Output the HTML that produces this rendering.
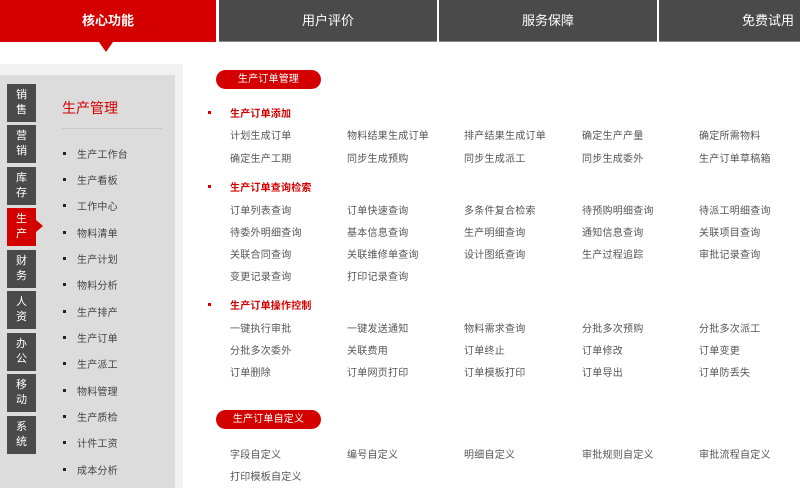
<!DOCTYPE html>
<html><head><meta charset="utf-8"><style>
*{margin:0;padding:0;box-sizing:border-box}
body{width:800px;height:488px;overflow:hidden;background:#fff;font-family:"Liberation Sans","Microsoft YaHei","Noto Sans CJK SC",sans-serif;position:relative}
.a{position:absolute;white-space:nowrap}
.tab{position:absolute;top:0;height:42px;background:#4a4a4a;color:#fff;font-size:13px;line-height:42px;text-align:center;border-bottom:1px solid #888}
.vt{position:absolute;left:7px;width:29px;height:38px;background:#4a4a4a;color:#fff;font-size:11px;line-height:15px;text-align:center;padding-top:4px}
.li{position:absolute;left:77px;font-size:10px;letter-spacing:.2px;color:#444}
.li:before{content:"";position:absolute;left:-14px;top:6px;width:3px;height:3px;background:#222}
.t{position:absolute;font-size:10px;letter-spacing:.25px;color:#555;white-space:nowrap}
.h{position:absolute;left:230px;font-size:10px;letter-spacing:.2px;color:#d40000;font-weight:bold}
.h:before{content:"";position:absolute;left:-22px;top:6px;width:3px;height:3px;background:#d40000}
.pill{position:absolute;left:216px;width:105px;height:19px;background:#d40000;border-radius:10px;color:#fff;font-size:10px;letter-spacing:.2px;line-height:19px;text-align:center}
</style></head><body>
<div class="tab" style="left:0;width:216px;background:#d40000;font-weight:bold;border-bottom:none">核心功能</div>
<div class="a" style="left:99px;top:42px;width:0;height:0;border-left:7px solid transparent;border-right:7px solid transparent;border-top:10px solid #d40000"></div>
<div class="tab" style="left:219px;width:218px">用户评价</div>
<div class="tab" style="left:439px;width:218px">服务保障</div>
<div class="tab" style="left:659px;width:218px">免费试用</div>

<div class="a" style="left:0;top:64px;width:183px;height:424px;background:#f1f1f1"></div>
<div class="a" style="left:0;top:75px;width:175px;height:413px;background:#dcdcdc"></div>
<div class="vt" style="top:84px">销<br>售</div>
<div class="vt" style="top:125px">营<br>销</div>
<div class="vt" style="top:167px">库<br>存</div>
<div class="vt" style="top:208px;background:#d40000">生<br>产</div>
<div class="a" style="left:36px;top:220px;width:0;height:0;border-top:6px solid transparent;border-bottom:6px solid transparent;border-left:7px solid #d40000"></div>
<div class="vt" style="top:250px">财<br>务</div>
<div class="vt" style="top:291px">人<br>资</div>
<div class="vt" style="top:333px">办<br>公</div>
<div class="vt" style="top:374px">移<br>动</div>
<div class="vt" style="top:416px">系<br>统</div>
<div class="a" style="left:62px;top:98px;font-size:14px;color:#d40000">生产管理</div>
<div class="a" style="left:62px;top:128px;width:100px;height:1px;background:#c8c8c8"></div>
<div class="li" style="top:146px">生产工作台</div>
<div class="li" style="top:172px">生产看板</div>
<div class="li" style="top:198px">工作中心</div>
<div class="li" style="top:225px">物料清单</div>
<div class="li" style="top:251px">生产计划</div>
<div class="li" style="top:277px">物料分析</div>
<div class="li" style="top:304px">生产排产</div>
<div class="li" style="top:330px">生产订单</div>
<div class="li" style="top:356px">生产派工</div>
<div class="li" style="top:383px">物料管理</div>
<div class="li" style="top:409px">生产质检</div>
<div class="li" style="top:435px">计件工资</div>
<div class="li" style="top:462px">成本分析</div>

<div class="pill" style="top:70px">生产订单管理</div>
<div class="h" style="top:105px">生产订单添加</div>
<div class="t" style="left:230px;top:127px">计划生成订单</div><div class="t" style="left:347px;top:127px">物料结果生成订单</div><div class="t" style="left:464px;top:127px">排产结果生成订单</div><div class="t" style="left:582px;top:127px">确定生产产量</div><div class="t" style="left:699px;top:127px">确定所需物料</div>
<div class="t" style="left:230px;top:150px">确定生产工期</div><div class="t" style="left:347px;top:150px">同步生成预购</div><div class="t" style="left:464px;top:150px">同步生成派工</div><div class="t" style="left:582px;top:150px">同步生成委外</div><div class="t" style="left:699px;top:150px">生产订单草稿箱</div>
<div class="h" style="top:179px">生产订单查询检索</div>
<div class="t" style="left:230px;top:202px">订单列表查询</div><div class="t" style="left:347px;top:202px">订单快速查询</div><div class="t" style="left:464px;top:202px">多条件复合检索</div><div class="t" style="left:582px;top:202px">待预购明细查询</div><div class="t" style="left:699px;top:202px">待派工明细查询</div>
<div class="t" style="left:230px;top:224px">待委外明细查询</div><div class="t" style="left:347px;top:224px">基本信息查询</div><div class="t" style="left:464px;top:224px">生产明细查询</div><div class="t" style="left:582px;top:224px">通知信息查询</div><div class="t" style="left:699px;top:224px">关联项目查询</div>
<div class="t" style="left:230px;top:246px">关联合同查询</div><div class="t" style="left:347px;top:246px">关联维修单查询</div><div class="t" style="left:464px;top:246px">设计图纸查询</div><div class="t" style="left:582px;top:246px">生产过程追踪</div><div class="t" style="left:699px;top:246px">审批记录查询</div>
<div class="t" style="left:230px;top:268px">变更记录查询</div><div class="t" style="left:347px;top:268px">打印记录查询</div>
<div class="h" style="top:297px">生产订单操作控制</div>
<div class="t" style="left:230px;top:320px">一键执行审批</div><div class="t" style="left:347px;top:320px">一键发送通知</div><div class="t" style="left:464px;top:320px">物料需求查询</div><div class="t" style="left:582px;top:320px">分批多次预购</div><div class="t" style="left:699px;top:320px">分批多次派工</div>
<div class="t" style="left:230px;top:342px">分批多次委外</div><div class="t" style="left:347px;top:342px">关联费用</div><div class="t" style="left:464px;top:342px">订单终止</div><div class="t" style="left:582px;top:342px">订单修改</div><div class="t" style="left:699px;top:342px">订单变更</div>
<div class="t" style="left:230px;top:364px">订单删除</div><div class="t" style="left:347px;top:364px">订单网页打印</div><div class="t" style="left:464px;top:364px">订单模板打印</div><div class="t" style="left:582px;top:364px">订单导出</div><div class="t" style="left:699px;top:364px">订单防丢失</div>
<div class="pill" style="top:410px">生产订单自定义</div>
<div class="t" style="left:230px;top:446px">字段自定义</div><div class="t" style="left:347px;top:446px">编号自定义</div><div class="t" style="left:464px;top:446px">明细自定义</div><div class="t" style="left:582px;top:446px">审批规则自定义</div><div class="t" style="left:699px;top:446px">审批流程自定义</div>
<div class="t" style="left:230px;top:468px">打印模板自定义</div>
</body></html>
